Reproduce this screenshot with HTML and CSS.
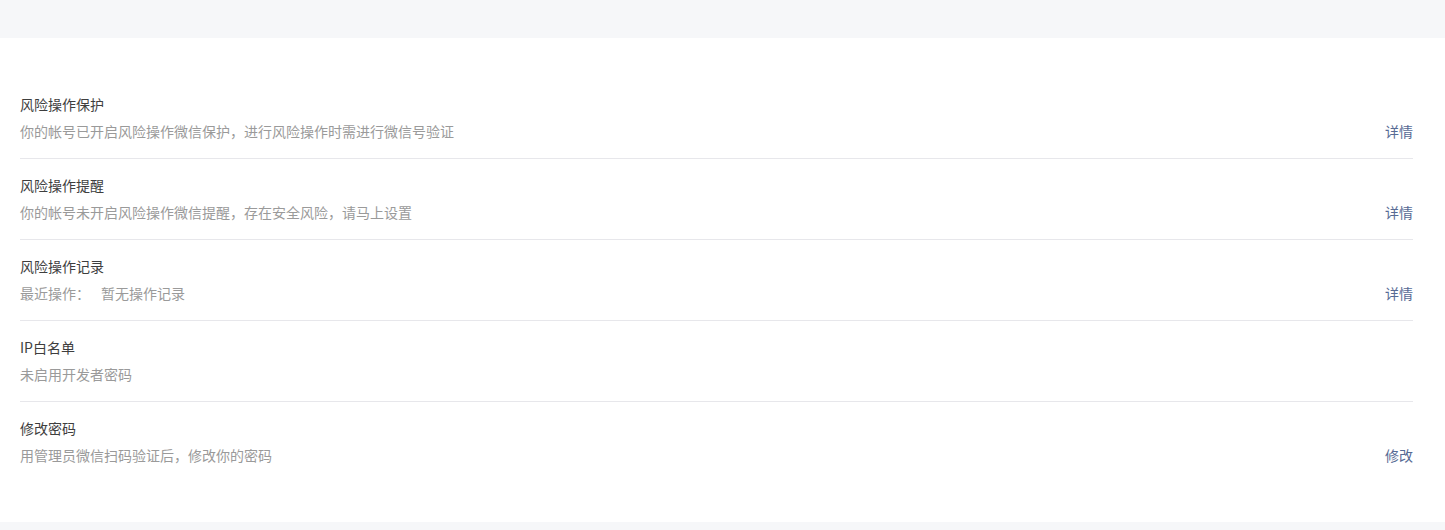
FILE: index.html
```html
<!DOCTYPE html>
<html lang="zh-CN">
<head>
<meta charset="utf-8">
<title>安全中心</title>
<link rel="stylesheet" href="styles.css">
</head>
<body>
<div class="top-band"></div>
<main class="card">
  <ul class="list">
    <li class="item">
      <div class="info">
        <div class="title">风险操作保护</div>
        <div class="desc">你的帐号已开启风险操作微信保护，进行风险操作时需进行微信号验证</div>
      </div>
      <a class="action" href="#">详情</a>
    </li>
    <li class="item">
      <div class="info">
        <div class="title">风险操作提醒</div>
        <div class="desc">你的帐号未开启风险操作微信提醒，存在安全风险，请马上设置</div>
      </div>
      <a class="action" href="#">详情</a>
    </li>
    <li class="item">
      <div class="info">
        <div class="title">风险操作记录</div>
        <div class="desc"><span>最近操作：</span><span class="recent">暂无操作记录</span></div>
      </div>
      <a class="action" href="#">详情</a>
    </li>
    <li class="item">
      <div class="info">
        <div class="title">IP白名单</div>
        <div class="desc">未启用开发者密码</div>
      </div>
    </li>
    <li class="item">
      <div class="info">
        <div class="title">修改密码</div>
        <div class="desc">用管理员微信扫码验证后，修改你的密码</div>
      </div>
      <a class="action" href="#">修改</a>
    </li>
  </ul>
</main>
</body>
</html>
```
FILE: styles.css
```css
html, body {
  margin: 0;
  padding: 0;
}
body {
  background: #f6f7f9;
  font-family: "Noto Sans CJK SC", "Liberation Sans", sans-serif;
  font-size: 14px;
  color: #353535;
  height: 530px;
  overflow: hidden;
}
.top-band {
  height: 38px;
}
.card {
  background: #ffffff;
  padding: 40px 32px 40px 20px;
}
.list {
  list-style: none;
  margin: 0;
  padding: 0;
}
.item {
  display: flex;
  align-items: flex-end;
  justify-content: space-between;
  padding: 16px 0 17px;
  border-bottom: 1px solid #e7e7eb;
}
.item:last-child {
  border-bottom: none;
}
.title {
  line-height: 20px;
  color: #3e3e3e;
}
.desc {
  margin-top: 7px;
  line-height: 20px;
  color: #9a9a9a;
}
.recent {
  margin-left: 11px;
}
.action {
  line-height: 20px;
  color: #576b95;
  text-decoration: none;
}
```
